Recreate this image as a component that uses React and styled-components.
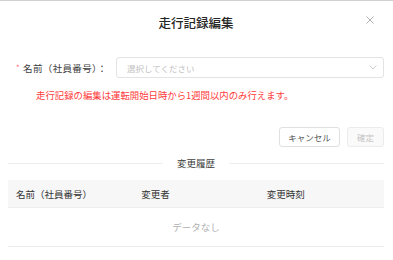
import React from 'react'
import styled, { createGlobalStyle } from 'styled-components'

const GlobalStyle = createGlobalStyle`
  html, body {
    margin: 0;
    padding: 0;
    background: #ffffff;
  }
  body {
    font-family: "Noto Sans CJK JP", "Noto Sans", sans-serif;
  }
`

const Modal = styled.div`
  box-sizing: border-box;
  width: 393px;
  height: 260px;
  border-top: 1px solid #d0d0d0;
  background: #fff;
  padding: 0 9px 0 8px;
  display: flex;
  flex-direction: column;
  overflow: hidden;
`

const Header = styled.div`
  position: relative;
  height: 44px;
  display: flex;
  align-items: center;
  justify-content: center;
`

const Title = styled.h3`
  margin: 0;
  font-size: 12.5px;
  font-weight: 500;
  color: #262626;
  line-height: 14px;
`

const Close = styled.button`
  position: absolute;
  right: 8px;
  top: 13px;
  width: 12px;
  height: 12px;
  padding: 0;
  border: none;
  background: none;
  display: flex;
  align-items: center;
  justify-content: center;
  color: #b0b0b0;
`

const FormRow = styled.div`
  margin-top: 12px;
  display: flex;
  align-items: center;
  height: 21px;
`

const Label = styled.label`
  width: 108px;
  padding-left: 8px;
  box-sizing: border-box;
  font-size: 9.5px;
  letter-spacing: 0.35px;
  color: #404040;
  display: flex;
  align-items: center;
  white-space: nowrap;
`

const Required = styled.span`
  color: #ff6b7a;
  font-size: 8px;
  margin-right: 3px;
`

const Select = styled.div`
  flex: 1;
  box-sizing: border-box;
  height: 21px;
  border: 1px solid #e3e3e3;
  border-radius: 3px;
  display: flex;
  align-items: center;
  justify-content: space-between;
  padding: 0 6px 0 10px;
  font-size: 8.5px;
  color: #c2c2c2;
`

const Notice = styled.p`
  margin: 10px 0 0 28px;
  font-size: 9.4px;
  color: #ff3b3b;
  line-height: 14px;
`

const Actions = styled.div`
  margin-top: 25px;
  display: flex;
  justify-content: flex-end;
  gap: 7px;
`

const Button = styled.button`
  box-sizing: border-box;
  height: 20px;
  width: ${p => p.w}px;
  border: 1px solid ${p => (p.disabled ? '#ececec' : '#e0e0e0')};
  border-radius: 3px;
  background: ${p => (p.disabled ? '#fafafa' : '#fff')};
  color: ${p => (p.disabled ? '#c4c4c4' : '#555')};
  font-family: inherit;
  font-size: 8.5px;
  padding: 0;
`

const Divider = styled.div`
  margin-top: 9px;
  display: flex;
  align-items: center;
  gap: 14px;
  font-size: 9.5px;
  line-height: 14px;
  color: #404040;
  &::before, &::after {
    content: '';
    flex: 1;
    height: 1px;
    background: #ededed;
  }
`

const Table = styled.div`
  margin-top: 10px;
  display: flex;
  flex-direction: column;
`

const HeadRow = styled.div`
  display: grid;
  grid-template-columns: 1fr 1fr 1fr;
  height: 27px;
  align-items: center;
  background: #f7f7f7;
  border-bottom: 1px solid #ededed;
`

const HeadCell = styled.div`
  padding-left: 8px;
  font-size: 9.5px;
  color: #333;
`

const Empty = styled.div`
  height: 38px;
  display: flex;
  align-items: center;
  justify-content: center;
  font-size: 9.5px;
  color: #b0b0b0;
  border-bottom: 1px solid #ededed;
`

export default function App() {
  return (
    <>
      <GlobalStyle />
      <Modal>
        <Header>
          <Title>走行記録編集</Title>
          <Close aria-label="close">
            <svg width="8" height="8" viewBox="0 0 8 8">
              <path d="M0.5 0.5L7.5 7.5M7.5 0.5L0.5 7.5" stroke="currentColor" strokeWidth="1" />
            </svg>
          </Close>
        </Header>
        <FormRow>
          <Label>
            <Required>*</Required>名前（社員番号）：
          </Label>
          <Select>
            <span>選択してください</span>
            <svg width="8" height="5" viewBox="0 0 8 5">
              <path d="M0.5 0.5L4 4L7.5 0.5" stroke="#c8c8c8" strokeWidth="0.9" fill="none" />
            </svg>
          </Select>
        </FormRow>
        <Notice>走行記録の編集は運転開始日時から1週間以内のみ行えます。</Notice>
        <Actions>
          <Button w={61}>キャンセル</Button>
          <Button w={37} disabled>確定</Button>
        </Actions>
        <Divider>変更履歴</Divider>
        <Table>
          <HeadRow>
            <HeadCell>名前（社員番号）</HeadCell>
            <HeadCell>変更者</HeadCell>
            <HeadCell>変更時刻</HeadCell>
          </HeadRow>
          <Empty>データなし</Empty>
        </Table>
      </Modal>
    </>
  )
}
